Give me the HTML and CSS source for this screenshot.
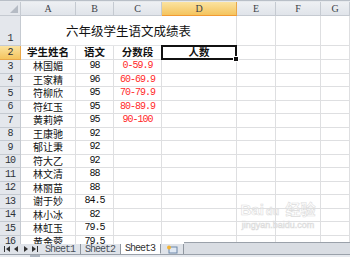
FILE: index.html
```html
<!DOCTYPE html>
<html lang="zh">
<head>
    <meta charset="UTF-8">
    <title>六年级学生语文成绩表</title>
    <link rel="stylesheet" href="styles.css">
</head>
<body>

<div class="sheet">
    <div class="topline"></div>

    <div class="grid">
        <div class="corner"><span class="tri"></span></div>
        <div class="colhead">A</div>
        <div class="colhead">B</div>
        <div class="colhead">C</div>
        <div class="colhead sel">D</div>
        <div class="colhead">E</div>
        <div class="colhead">F</div>
        <div class="colhead">G</div>

        <div class="rowhead r1">1</div>
        <div class="cell title">六年级学生语文成绩表</div>
        <div class="cell"></div><div class="cell"></div><div class="cell"></div>

        <div class="rowhead sel">2</div>
        <div class="cell hd">学生姓名</div>
        <div class="cell hd">语文</div>
        <div class="cell hd">分数段</div>
        <div class="cell hd active">人数<span class="handle"></span></div>
        <div class="cell"></div><div class="cell"></div><div class="cell"></div>

        <div class="rowhead">3</div>
        <div class="cell">林国媚</div><div class="cell num">98</div><div class="cell num red">0-59.9</div>
        <div class="cell"></div><div class="cell"></div><div class="cell"></div><div class="cell"></div>

        <div class="rowhead">4</div>
        <div class="cell">王家精</div><div class="cell num">96</div><div class="cell num red">60-69.9</div>
        <div class="cell"></div><div class="cell"></div><div class="cell"></div><div class="cell"></div>

        <div class="rowhead">5</div>
        <div class="cell">符柳欣</div><div class="cell num">95</div><div class="cell num red">70-79.9</div>
        <div class="cell"></div><div class="cell"></div><div class="cell"></div><div class="cell"></div>

        <div class="rowhead">6</div>
        <div class="cell">符红玉</div><div class="cell num">95</div><div class="cell num red">80-89.9</div>
        <div class="cell"></div><div class="cell"></div><div class="cell"></div><div class="cell"></div>

        <div class="rowhead">7</div>
        <div class="cell">黄莉婷</div><div class="cell num">95</div><div class="cell num red">90-100</div>
        <div class="cell"></div><div class="cell"></div><div class="cell"></div><div class="cell"></div>

        <div class="rowhead">8</div>
        <div class="cell">王康驰</div><div class="cell num">92</div><div class="cell"></div>
        <div class="cell"></div><div class="cell"></div><div class="cell"></div><div class="cell"></div>

        <div class="rowhead">9</div>
        <div class="cell">郁让秉</div><div class="cell num">92</div><div class="cell"></div>
        <div class="cell"></div><div class="cell"></div><div class="cell"></div><div class="cell"></div>

        <div class="rowhead">10</div>
        <div class="cell">符大乙</div><div class="cell num">92</div><div class="cell"></div>
        <div class="cell"></div><div class="cell"></div><div class="cell"></div><div class="cell"></div>

        <div class="rowhead">11</div>
        <div class="cell">林文清</div><div class="cell num">88</div><div class="cell"></div>
        <div class="cell"></div><div class="cell"></div><div class="cell"></div><div class="cell"></div>

        <div class="rowhead">12</div>
        <div class="cell">林丽苗</div><div class="cell num">88</div><div class="cell"></div>
        <div class="cell"></div><div class="cell"></div><div class="cell"></div><div class="cell"></div>

        <div class="rowhead">13</div>
        <div class="cell">谢于妙</div><div class="cell num">84.5</div><div class="cell"></div>
        <div class="cell"></div><div class="cell"></div><div class="cell"></div><div class="cell"></div>

        <div class="rowhead">14</div>
        <div class="cell">林小冰</div><div class="cell num">82</div><div class="cell"></div>
        <div class="cell"></div><div class="cell"></div><div class="cell"></div><div class="cell"></div>

        <div class="rowhead">15</div>
        <div class="cell">林虹玉</div><div class="cell num">79.5</div><div class="cell"></div>
        <div class="cell"></div><div class="cell"></div><div class="cell"></div><div class="cell"></div>

        <div class="rowhead">16</div>
        <div class="cell">黄金蓉</div><div class="cell num">79.5</div><div class="cell"></div>
        <div class="cell"></div><div class="cell"></div><div class="cell"></div><div class="cell"></div>
    </div>

    <div class="tabbar">
        <div class="nav">
            <svg width="36" height="8" viewBox="0 0 36 8">
                <rect x="1" y="1" width="1" height="6" fill="#333"/>
                <polygon points="7,1 3,4 7,7" fill="#333"/>
                <polygon points="15,1 11,4 15,7" fill="#333"/>
                <polygon points="21,1 25,4 21,7" fill="#333"/>
                <polygon points="29,1 33,4 29,7" fill="#333"/>
                <rect x="34" y="1" width="1" height="6" fill="#333"/>
            </svg>
        </div>
        <div class="tab">Sheet1</div>
        <div class="tab">Sheet2</div>
        <div class="tab current">Sheet3</div>
        <div class="tab newsheet">
            <svg width="12" height="9" viewBox="0 0 12 9">
                <rect x="3" y="2" width="8" height="6" fill="#dfe8f3" stroke="#6d87a8" stroke-width="1"/>
                <circle cx="3" cy="2.5" r="2" fill="#f3b233"/>
            </svg>
        </div>
        <div class="scrollarea"></div>
    </div>
    <div class="status"><span class="statusmark"></span></div>

    <div class="watermark">
        <div class="wm-logo">Bai<span class="paw">du</span> 经验</div>
        <div class="wm-url">jingyan.baidu.com</div>
    </div>
</div>

</body>
</html>
```

FILE: styles.css
```css
body { margin: 0; background: #fff; }

.sheet {
    position: relative;
    width: 350px;
    height: 257px;
    overflow: hidden;
    font-family: "Noto Sans CJK SC", "DejaVu Sans", sans-serif;
    color: #111;
}

.topline {
    height: 2px;
    background: #b9bfc7;
    border-bottom: 1px solid #e6e9ed;
    box-sizing: border-box;
}

.grid {
    display: grid;
    grid-template-columns: 21px 55px 38px 48px 75px 39px 45px 29px;
    grid-template-rows: 14px 30px 14px repeat(14, 13.5px);
    height: 242px;
    overflow: hidden;
}

.corner {
    position: relative;
    background: #e4e7ec;
    border-right: 1px solid #c5cad1;
    border-bottom: 1px solid #c5cad1;
    box-sizing: border-box;
}
.corner .tri {
    position: absolute;
    right: 2px;
    bottom: 2px;
    width: 0;
    height: 0;
    border-left: 8px solid transparent;
    border-bottom: 8px solid #b5bbc4;
}

.colhead, .rowhead {
    display: flex;
    align-items: center;
    justify-content: center;
    background: linear-gradient(#eef0f3, #e0e4ea);
    border-right: 1px solid #c5cad1;
    border-bottom: 1px solid #c5cad1;
    box-sizing: border-box;
    font-family: "Liberation Serif", serif;
    font-size: 10px;
    color: #3c4148;
}
.rowhead {
    background: #e4e7ec;
    font-family: "Liberation Mono", monospace;
    letter-spacing: -1px;
    font-size: 10px;
    color: #2d3238;
}
.rowhead.r1 { align-items: flex-end; padding-bottom: 1px; }
.colhead.sel, .rowhead.sel {
    background: linear-gradient(#fbe3a0, #f4c45e);
    border-right-color: #e8a74a;
    border-bottom-color: #e8a74a;
}
.colhead.sel { border-bottom: 1px solid #f29a33; }

.cell {
    display: flex;
    align-items: center;
    justify-content: center;
    border-right: 1px solid #dedfe1;
    border-bottom: 1px solid #dedfe1;
    box-sizing: border-box;
    font-size: 10px;
    line-height: 1;
    white-space: nowrap;
}

.title {
    grid-column: 2 / 6;
    font-size: 12.5px;
    padding-top: 2px;
    border-bottom-color: #e4e5e7;
}

.hd { font-weight: bold; font-size: 10.5px; }

.num {
    font-family: "Liberation Mono", monospace;
    letter-spacing: -1px;
    font-size: 10px;
}
.red { color: #ff2a2a; }

.active { position: relative; }
.active::after {
    content: "";
    position: absolute;
    left: -1px;
    top: -1px;
    right: -1px;
    bottom: -1px;
    border: 2px solid #111;
}
.handle {
    position: absolute;
    right: -3px;
    bottom: -3px;
    width: 4px;
    height: 4px;
    background: #111;
    border: 1px solid #fff;
    z-index: 2;
}

.tabbar {
    display: flex;
    align-items: stretch;
    height: 10px;
    background: #dfe3e9;
    border-bottom: 1px solid #9aa1aa;
    box-sizing: content-box;
}
.nav {
    display: flex;
    align-items: center;
    width: 41px;
    padding-left: 3px;
    box-sizing: border-box;
}
.tab {
    position: relative;
    display: flex;
    align-items: center;
    padding: 0 5px 0 4px;
    font-family: "Liberation Mono", monospace;
    letter-spacing: -1px;
    font-size: 10px;
    color: #4a5059;
    border-right: 1px solid #8f969f;
}
.tab:first-of-type { border-left: 1px solid #8f969f; }
.tab.current {
    background: #fff;
    color: #333;
    border-bottom: 1px solid #fff;
}
.tab.newsheet { padding: 0 5px; }
.scrollarea {
    flex: 1;
    background: #d9dde3;
    border-top: 1px solid #9aa1aa;
    margin-top: -2px;
}

.status {
    height: 2px;
    background: #e6e9ee;
    position: relative;
}
.statusmark {
    position: absolute;
    left: 30px;
    top: 0;
    width: 10px;
    height: 2px;
    background: #aeb6c1;
}

.watermark {
    position: absolute;
    left: 233px;
    top: 201px;
    width: 90px;
    text-align: center;
    color: rgba(255, 255, 255, 0.3);
    -webkit-text-stroke: 0.6px #dcdcdc;
    pointer-events: none;
}
.wm-logo {
    font-family: "Liberation Sans", "Noto Sans CJK SC", sans-serif;
    font-size: 15px;
    font-weight: bold;
    line-height: 18px;
    white-space: nowrap;
}
.paw { font-size: 11px; margin: 0 2px; }
.wm-url {
    font-family: "Liberation Sans", sans-serif;
    font-size: 9px;
    line-height: 11px;
}
```
